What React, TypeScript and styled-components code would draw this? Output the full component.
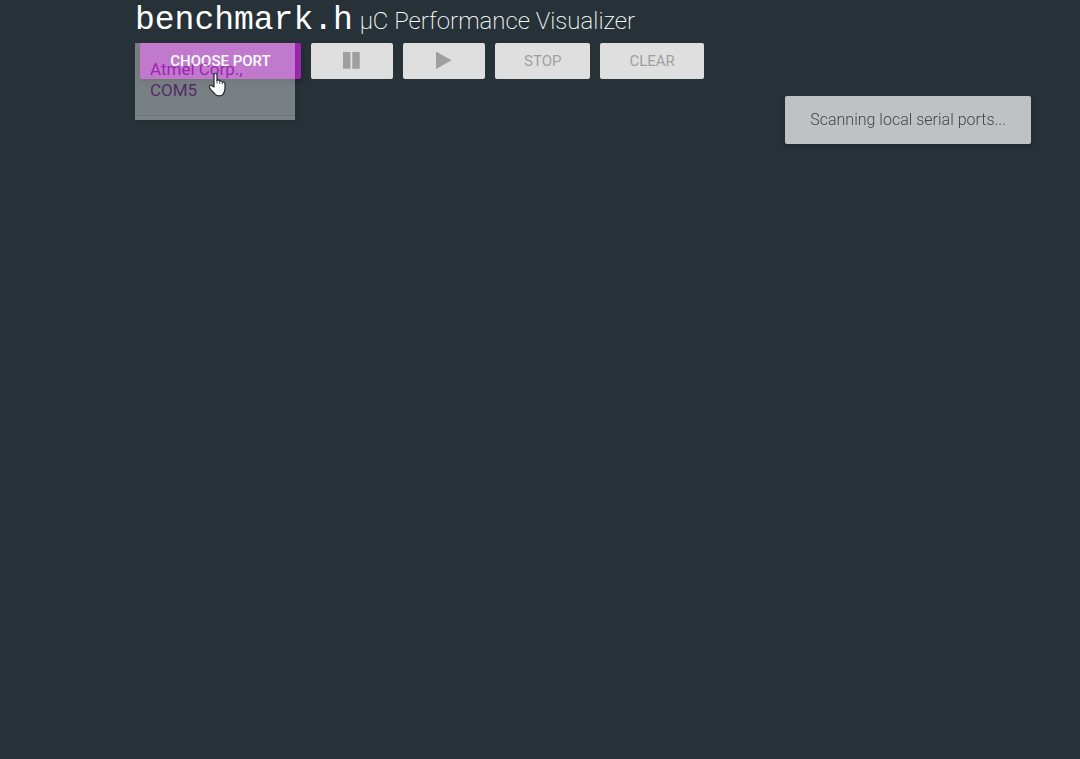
import React from "react";
import styled, { createGlobalStyle } from "styled-components";

const GlobalStyle = createGlobalStyle`
  *, *::before, *::after { box-sizing: border-box; }
  body {
    margin: 0;
    min-height: 100vh;
    background: #263238;
    color: #fff;
    font-family: Roboto, "Liberation Sans", sans-serif;
  }
`;

const Page = styled.main`
  width: 75%;
  margin: 0 auto;
`;

const Title = styled.h1`
  margin: 0;
  padding-top: 3px;
  height: 43px;
  font-size: 24px;
  font-weight: 200;
  line-height: 36px;
  white-space: nowrap;
`;

const LibraryName = styled.code`
  margin-right: 1px;
  font-family: "Courier New", "Liberation Mono", monospace;
  font-size: 33px;
  font-weight: 400;
  line-height: 36px;
`;

const Toolbar = styled.div`
  position: relative;
  display: flex;
  gap: 10px;
  padding-left: 5px;
`;

const Button = styled.button<{ $primary?: boolean }>`
  display: flex;
  align-items: center;
  justify-content: center;
  height: 36px;
  padding: 0 29px;
  border: 0;
  border-radius: 2px;
  font: ${(p) => (p.$primary ? 500 : 400)} 15px/36px Roboto, "Liberation Sans", sans-serif;
  color: ${(p) => (p.$primary ? "#fff" : "#9f9f9f")};
  background: ${(p) => (p.$primary ? "#9c27b0" : "#dfdfdf")};
  box-shadow: ${(p) => (p.$primary ? "0 3px 6px rgba(0, 0, 0, 0.3)" : "none")};
  text-transform: uppercase;
  white-space: nowrap;
  cursor: ${(p) => (p.$primary ? "pointer" : "default")};
`;

const PortButton = styled(Button)`
  width: 161px;
`;

const PortMenu = styled.ul`
  position: absolute;
  top: 0;
  left: 0;
  width: 160px;
  margin: 0;
  padding: 0 0 4px;
  list-style: none;
  background: #fff;
  opacity: 0.39;
  box-shadow: 0 2px 5px rgba(0, 0, 0, 0.2);
`;

const PortItem = styled.li`
  border-bottom: 1px solid #e0e0e0;
  background: #fafafa;
`;

const PortLink = styled.a`
  display: block;
  padding: 16px 15px 14px;
  color: #9c27b0;
  font-size: 17px;
  line-height: 21px;
  text-decoration: none;
`;

const Pointer = styled.svg`
  position: absolute;
  top: 29px;
  left: 73px;
  pointer-events: none;
`;

const Toast = styled.div`
  position: fixed;
  top: 96px;
  right: 49px;
  padding: 0 25px;
  border-radius: 2px;
  background: #bec2c3;
  color: #42464f;
  font-size: 16px;
  font-weight: 300;
  line-height: 48px;
  box-shadow: 0 2px 5px rgba(0, 0, 0, 0.2);
`;

export default function App() {
  return (
    <>
      <GlobalStyle />
      <Page>
        <Title>
          <LibraryName>benchmark.h</LibraryName> µC Performance Visualizer
        </Title>
        <Toolbar>
          <PortButton type="button" $primary>
            Choose port
          </PortButton>
          <Button type="button" disabled aria-label="Pause">
            <svg width="24" height="24" viewBox="0 0 24 24" fill="#9f9f9f" aria-hidden="true">
              <path d="M3.6 3h6.2q.6 0 .6.6v15.6q0 .6-.6.6H3.6q-.6 0-.6-.6V3.6q0-.6.6-.6zM12.9 3h6.3q.6 0 .6.6v15.6q0 .6-.6.6h-6.3q-.6 0-.6-.6V3.6q0-.6.6-.6z" />
            </svg>
          </Button>
          <Button type="button" disabled aria-label="Play">
            <svg width="24" height="24" viewBox="0 0 24 24" fill="#9f9f9f" aria-hidden="true">
              <path d="M4 2.6v17.4L19.6 11.3z" />
            </svg>
          </Button>
          <Button type="button" disabled>
            Stop
          </Button>
          <Button type="button" disabled>
            Clear
          </Button>
          <PortMenu>
            <PortItem>
              <PortLink href="#com5">
                Atmel Corp.,
                <br />
                COM5
              </PortLink>
            </PortItem>
          </PortMenu>
          <Pointer width="18" height="25" viewBox="0 0 18 25" aria-hidden="true">
            <path
              d="M6 14V3.2C6 .6 9 .6 9 3.2V8.4C9.7 7.5 11.4 7.8 11.7 9.2 12.6 8.5 14.1 8.9 14.3 10.2 15.6 9.7 17 10.4 17 12V16.5C17 19.8 15.6 21.2 15 22.4 13.6 24.3 9 24.3 7.2 22.4 5.6 20.6 3.4 18.6 1.8 16 .6 14.1 2.2 12.9 3.6 13.4L6 15z"
              fill="#fff"
              stroke="#1f2833"
              strokeWidth="1.2"
              strokeLinejoin="round"
            />
            <path
              d="M9 8v3.5M11.7 9.5v2.5M14.3 10.5v2"
              stroke="#1f2833"
              strokeWidth="0.8"
              fill="none"
            />
          </Pointer>
        </Toolbar>
      </Page>
      <Toast role="status">Scanning local serial ports...</Toast>
    </>
  );
}
